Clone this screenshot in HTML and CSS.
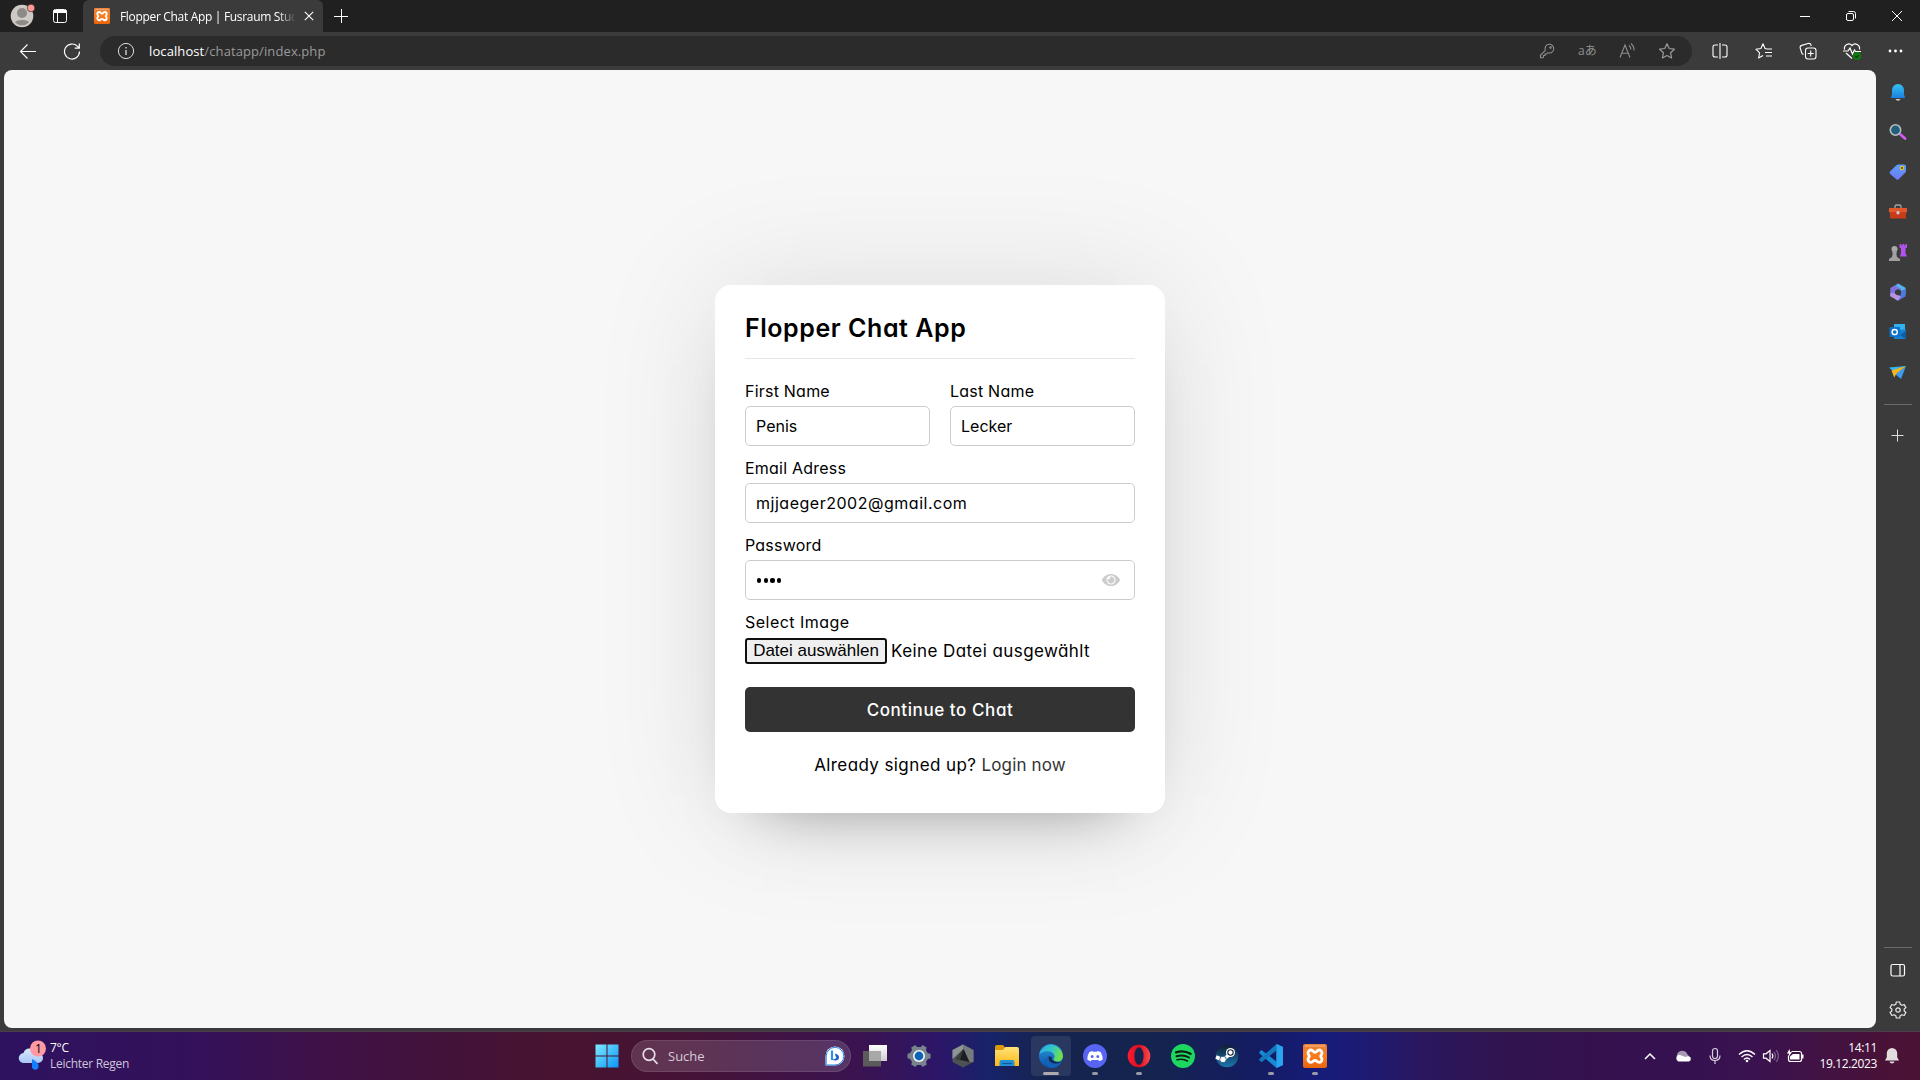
FILE: index.html
```
<!DOCTYPE html>
<html lang="de">
<head>
<meta charset="utf-8">
<title>Flopper Chat App</title>
<link rel="stylesheet" href="styles.css">
</head>
<body>
<svg class="defs" width="0" height="0" aria-hidden="true">
  <defs>
    <linearGradient id="orange" x1="0" y1="0" x2="0" y2="1"><stop offset="0" stop-color="#e8823a"/><stop offset=".5" stop-color="#fb7d1c"/><stop offset="1" stop-color="#e8640c"/></linearGradient>
    <linearGradient id="bell" x1="0" y1="0" x2="0" y2="1"><stop offset="0" stop-color="#35c2f2"/><stop offset="1" stop-color="#1b7fe0"/></linearGradient>
    <linearGradient id="tag" x1="0" y1="0" x2="0" y2="1"><stop offset="0" stop-color="#5aa2fa"/><stop offset="1" stop-color="#7077f5"/></linearGradient>
    <linearGradient id="win" x1="0" y1="0" x2="1" y2="1"><stop offset="0" stop-color="#7deaff"/><stop offset="1" stop-color="#0a95f5"/></linearGradient>
    <linearGradient id="folder" x1="0" y1="0" x2="0" y2="1"><stop offset="0" stop-color="#ffe27a"/><stop offset="1" stop-color="#fdb813"/></linearGradient>
    <linearGradient id="edgeTop" x1="0" y1="0" x2="1" y2=".3"><stop offset="0" stop-color="#2aa9e8"/><stop offset=".6" stop-color="#35c9c0"/><stop offset="1" stop-color="#6fe04c"/></linearGradient>
    <linearGradient id="edgeBot" x1="0" y1="0" x2="0" y2="1"><stop offset="0" stop-color="#2a9be0"/><stop offset="1" stop-color="#0a4fa6"/></linearGradient>
    <linearGradient id="opera" x1="0" y1="0" x2="1" y2="0"><stop offset="0" stop-color="#ff1b2d"/><stop offset=".5" stop-color="#d80d20"/><stop offset="1" stop-color="#ff4b4b"/></linearGradient>
    <linearGradient id="steam" x1="0" y1="0" x2="0" y2="1"><stop offset="0" stop-color="#101b33"/><stop offset="1" stop-color="#1b78b0"/></linearGradient>
    <linearGradient id="cloud" x1="0" y1="0" x2="0" y2="1"><stop offset="0" stop-color="#dbe9ff"/><stop offset="1" stop-color="#a8c6f7"/></linearGradient>
    <linearGradient id="task" x1="0" y1="0" x2="0" y2="1"><stop offset="0" stop-color="#ffffff"/><stop offset="1" stop-color="#cfcfcf"/></linearGradient>
    <symbol id="xampp" viewBox="0 0 24 24">
      <rect width="24" height="24" rx="2" fill="url(#orange)"/>
      <path d="M2 2h20" stroke="#f6b98a" stroke-width="1"/>
      <path d="M8 6a3 3 0 0 0-3 3c0 1.600 1.300 2 1.300 3.200S5 13.800 5 15.300a3 3 0 0 0 3 3c2.200 0 2-2 4-2s1.800 2 4 2a3 3 0 0 0 3-3c0-1.500-1.300-1.900-1.300-3.100S19 10.600 19 9a3 3 0 0 0-3-3c-2.200 0-1.800 2.400-4 2.400S10.200 6 8 6z" fill="none" stroke="#fff" stroke-width="2.800"/>
    </symbol>
  </defs>
</svg>
<div class="screen">
  <div class="browser">
    <div class="tabstrip">
      <svg class="avatar" width="26" height="26" viewBox="0 0 26 26"><circle cx="12" cy="14" r="11.300" fill="#cdc9c5"/><circle cx="12" cy="11" r="5" fill="#8e8a87"/><path d="M5 20.500c1-3.500 13-3.500 14 0a10.500 10.500 0 0 1-14 0z" fill="#8e8a87"/><circle cx="21" cy="6" r="3.800" fill="#ff9a96" stroke="#202020" stroke-width=".6"/></svg>
      <svg class="tabactions" width="16" height="16" viewBox="0 0 16 16" fill="none" stroke="#fff"><rect x="1.500" y="1.500" width="13" height="13" rx="2"/><path d="M1.500 3h13M5.500 5v9" stroke-width="1"/><path d="M2 2.500h12v2H2z" fill="#fff"/></svg>
      <div class="tab">
        <svg width="16" height="16"><use href="#xampp"/></svg>
        <span class="tab-title">Flopper Chat App | Fusraum Stud</span>
        <svg width="10" height="10" viewBox="0 0 10 10" stroke="#fff" stroke-width="1.100"><path d="M.8.800l8.400 8.400M9.200.800L.8 9.200"/></svg>
      </div>
      <svg class="newtab" width="16" height="16" viewBox="0 0 16 16" stroke="#fff"><path d="M8.500 1v14M1 8.500h14"/></svg>
      <div class="winbuttons">
        <svg width="12" height="12" viewBox="0 0 12 12" stroke="#fff"><path d="M1 6.500h10"/></svg>
        <svg width="12" height="12" viewBox="0 0 12 12" fill="none" stroke="#fff"><rect x="1.500" y="3.500" width="7" height="7" rx="1.500"/><path d="M3.500 1.500h5q2 0 2 2v5"/></svg>
        <svg width="12" height="12" viewBox="0 0 12 12" stroke="#fff"><path d="M1 1l10 10M11 1L1 11"/></svg>
      </div>
    </div>
    <div class="toolbar">
      <div class="nav">
        <svg width="18" height="18" viewBox="0 0 18 18" fill="none" stroke="#fff" stroke-width="1.100"><path d="M17 9.500H1.500M8.500 2.500l-7 7 7 7"/></svg>
        <svg width="18" height="18" viewBox="0 0 18 18" fill="none" stroke="#fff" stroke-width="1.200"><path d="M16.500 9.500a7.500 7.500 0 1 1-2.200-5.300l1.700 1.700M16.300 1.500v4.600h-4.600"/></svg>
      </div>
      <div class="omnibox">
        <svg width="18" height="18" viewBox="0 0 18 18" fill="none" stroke="#ddd"><circle cx="9" cy="9" r="7.600"/><path d="M9 8v5M9 5v1.500" stroke-width="1.300"/></svg>
        <span class="url"><b>localhost</b>/chatapp/index.php</span>
        <div class="omni-icons">
          <svg width="18" height="18" viewBox="0 0 18 18" fill="none" stroke="#8f8f8f" stroke-width="1.100"><path d="M7.300 8.300A4.400 4.400 0 1 1 9.700 10.700L8.500 12H7v1.500H5.500V15l-.7.800H2.500v-2.500z"/><circle cx="12.500" cy="5.500" r=".7"/></svg>
          <span class="aa">aあ</span>
          <svg width="18" height="18" viewBox="0 0 18 18" fill="none" stroke="#8f8f8f" stroke-width="1.100"><path d="M2 15.500L7 3l5 12.500M3.700 11.200h6.600M11 3.500q2 1.500 1.800 4M13 1.500q3.400 3 3 7"/></svg>
          <svg width="18" height="18" viewBox="0 0 18 18" fill="none" stroke="#9a9a9a" stroke-width="1.200" stroke-linejoin="round"><path d="M9 1.800l2.200 4.700 5.200.700-3.800 3.600 1 5.200L9 13.500 4.400 16l1-5.200L1.600 7.200l5.200-.7z"/></svg>
        </div>
      </div>
      <div class="tools">
        <svg width="18" height="18" viewBox="0 0 18 18" fill="none" stroke="#fff" stroke-width="1.100"><path d="M7 3H4Q2 3 2 5v8q0 2 2 2h3M11 3h3q2 0 2 2v8q0 2-2 2h-3M9 1v16"/></svg>
        <svg width="18" height="18" viewBox="0 0 18 18" fill="none" stroke="#fff" stroke-width="1.100" stroke-linejoin="round"><path d="M12 7l-2-.5L8 1.800 5.900 6.500.900 7.200l3.700 3.600-1 5.200L8 13.500M11.500 7H17M10 10.500h7M11 14h6"/></svg>
        <svg width="18" height="18" viewBox="0 0 18 18" fill="none" stroke="#fff" stroke-width="1.100"><rect x="6.500" y="6" width="10.500" height="11" rx="2.500"/><path d="M11.700 8.500v6M8.700 11.500h6M4.500 12.500L3 11.700 1.200 6q-.5-2 1.500-2.600L9 1.500q2.500-.500 3 1.500l.3 1"/></svg>
        <svg width="18" height="18" viewBox="0 0 18 18" fill="none" stroke="#fff" stroke-width="1.200"><path d="M1.500 7.500c-.8-4.500 4.500-7.500 7.500-4 3-3.500 8.300-.5 7.500 4M0 9h5l2-3 2.500 6 2-4 1 1.500H18M3 11l6 5.500"/><circle cx="14" cy="14" r="4" fill="#107c10" stroke="none"/><path d="M12 14l1.500 1.500L16 13" stroke="#063e06"/></svg>
        <svg width="18" height="18" viewBox="0 0 18 18" fill="#fff"><circle cx="3" cy="9" r="1.400"/><circle cx="8.500" cy="9" r="1.400"/><circle cx="14" cy="9" r="1.400"/></svg>
      </div>
    </div>
    <div class="body">
      <main class="page">
        <section class="card">
          <h1>Flopper Chat App</h1>
          <form>
            <div class="names">
              <div class="field"><label>First Name</label><div class="input name">Penis</div></div>
              <div class="field"><label>Last Name</label><div class="input name">Lecker</div></div>
            </div>
            <div class="field"><label>Email Adress</label><div class="input mail">mjjaeger2002@gmail.com</div></div>
            <div class="field"><label>Password</label>
              <div class="input pw"><span class="dots"><i></i><i></i><i></i><i></i></span>
                <svg width="18" height="16" viewBox="0 0 576 512" fill="#ccc"><path d="M288 144a110.940 110.940 0 0 0-31.240 5 55.400 55.400 0 0 1 7.240 27 56 56 0 0 1-56 56 55.400 55.400 0 0 1-27-7.240A111.710 111.710 0 1 0 288 144zm284.520 97.400C518.290 135.590 410.930 64 288 64S57.680 135.640 3.480 241.410a32.350 32.350 0 0 0 0 29.190C57.710 376.410 165.070 448 288 448s230.320-71.640 284.520-177.410a32.350 32.350 0 0 0 0-29.190zM288 400a144 144 0 1 1 144-144 143.930 143.930 0 0 1-144 144z"/></svg>
              </div>
            </div>
            <div class="field file"><label>Select Image</label>
              <div class="filerow"><span class="filebtn">Datei auswählen</span><span class="filename">Keine Datei ausgewählt</span></div>
            </div>
            <div class="submit">Continue to Chat</div>
          </form>
          <p class="link">Already signed up? <a>Login now</a></p>
        </section>
      </main>
      <aside class="sidebar">
        <svg width="20" height="20" viewBox="0 0 20 20"><path d="M10 2a6 6 0 0 0-6 6v4.500L2.800 16h14.400L16 12.500V8a6 6 0 0 0-6-6z" fill="url(#bell)"/><path d="M7.500 17h5q-.5 1.800-2.500 1.800T7.500 17z" fill="#c8c8c8"/></svg>
        <svg width="20" height="20" viewBox="0 0 20 20"><path d="M12.500 12.500l4.500 4" stroke="#d05cf0" stroke-width="2.800" stroke-linecap="round"/><circle cx="7.500" cy="8" r="5.200" fill="#1f5f7d" stroke="#b9bcbd" stroke-width="1.600"/></svg>
        <svg width="20" height="20" viewBox="0 0 20 20"><path d="M10.500 2.500H16q2 0 2 2V9q0 1-.8 1.800l-6.500 6.500q-1.200 1.200-2.400 0L2.200 12Q1 10.800 2 9.500L8.500 3.300q.9-.8 2-.8z" fill="url(#tag)"/><circle cx="14" cy="6" r="1.600" fill="#3c3c5c" stroke="#f2c21b" stroke-width="1.200"/></svg>
        <svg width="20" height="20" viewBox="0 0 20 20"><path d="M7 6V4.500Q7 3 8.500 3h3Q13 3 13 4.500V6" fill="none" stroke="#a5a5a5" stroke-width="1.300"/><path d="M1 6h18v4.500H1z" fill="#e2572b"/><path d="M2 10h16v6.500H2z" fill="#c83c1c"/><circle cx="10" cy="10.800" r="1.700" fill="#c9c9c9"/></svg>
        <svg width="20" height="20" viewBox="0 0 20 20"><path d="M11.500 2h1.700v1.500h1.200V2h1.800v1.500h1.200V2H19v3.500l-1.500 1V11l1.500 3.500h-7L13 11V6.500l-1.500-1z" fill="#b353ee"/><circle cx="6.500" cy="7" r="3" fill="#a9a9a9"/><path d="M4 9.500h5v1.300H8.200l.8 4.200 3 2v2H1v-2l3-2 .8-4.200H4z" fill="#a0a0a0"/></svg>
        <svg width="20" height="20" viewBox="0 0 20 20"><path d="M10 1.500L12.500 3v6L7 12l-1 3.500L2.300 14V6z" fill="#7f74de"/><path d="M10 1.500l7.500 4.300V12l-5-2V6.500L8 4z" fill="#55b5ee"/><path d="M17.700 7v7.200L10 18.700l-2.600-1.500 5.100-3V9z" fill="#4f79e0"/><path d="M2.300 11l4.700.5 6 2.700-3 4.500-7.700-4.500z" fill="#b893e6"/><path d="M10 7l3 1.700v3.100L10 13.500l-3-1.700V8.700z" fill="#3b3b3b"/></svg>
        <svg width="20" height="20" viewBox="0 0 20 20"><path d="M6 2h11v8H6z" fill="#35b0ee"/><path d="M6 8l12-.5V17H6z" fill="#1681cf"/><path d="M18 9v8l-6-4z" fill="#0f5ea3"/><rect x="1.500" y="5" width="10.500" height="10" rx="1" fill="#0a72cb"/><circle cx="6.700" cy="10" r="2.600" fill="none" stroke="#fff" stroke-width="1.500"/></svg>
        <svg width="20" height="20" viewBox="0 0 20 20"><path d="M1 5.500L18 4 7 11z" fill="#38b6f0"/><path d="M18 4l-5 13-6-5z" fill="#3a9bf0"/><path d="M3.500 8.500L18 4 8.500 11.500l-2.300 4z" fill="#f2b51e"/></svg>
        <hr>
        <svg class="plus" width="20" height="20" viewBox="0 0 20 20" stroke="#ddd"><path d="M9.500 3.500v12M3.500 9.500h12"/></svg>
        <hr class="low">
        <svg class="panel" width="20" height="20" viewBox="0 0 20 20" fill="none" stroke="#fff" stroke-width="1.200"><rect x="3" y="4.500" width="13.500" height="11.500" rx="1.800"/><path d="M12 4.500V16"/></svg>
        <svg width="20" height="20" viewBox="0 0 20 20" fill="none" stroke="#e8e8e8" stroke-width="1.200" stroke-linejoin="round"><path d="M8.300 2h3.400l.5 2.300 1.700 1 2.300-.7 1.700 3L16.200 9v2l1.700 1.500-1.700 3-2.300-.8-1.700 1-.5 2.300H8.300l-.5-2.300-1.700-1-2.300.800-1.700-3L3.800 11V9L2.100 7.500l1.700-3 2.300.800 1.700-1z"/><circle cx="10" cy="10" r="2.200"/></svg>
      </aside>
    </div>
  </div>
  <footer class="taskbar">
    <div class="weather">
      <svg width="30" height="34" viewBox="0 0 30 34"><path d="M7 24a5 5 0 0 1-.5-10Q8 9 13 9.500T20 14h1a5 5 0 0 1 0 10z" fill="url(#cloud)"/><path d="M15 20q7 3 6.500 8a3.300 3.300 0 0 1-6.500 0z" fill="#1480ff"/><circle cx="21" cy="9.500" r="8" fill="#ff99a4"/><text x="21.500" y="13.800" class="badge">1</text></svg>
      <div class="weather-text"><span>7°C</span><span class="rain">Leichter Regen</span></div>
    </div>
    <div class="dock">
      <svg class="start" width="24" height="24" viewBox="0 0 24 24" fill="url(#win)"><path d="M.5.500h11v11H.5zM12.500.500h11v11h-11zM.5 12.500h11v11H.5zM12.500 12.500h11v11h-11z"/></svg>
      <div class="search">
        <svg width="18" height="18" viewBox="0 0 18 18" fill="none" stroke="#e6dde8" stroke-width="1.700"><circle cx="8" cy="7.500" r="5.800"/><path d="M12 12l4 4.300" stroke-linecap="round"/></svg>
        <span>Suche</span>
        <svg width="20" height="20" viewBox="0 0 20 20"><path d="M.5 19.500V10A9.500 9.500 0 1 1 10 19.500z" fill="#fff"/><path d="M1.200 19V10A8.800 8.800 0 1 1 10 19z" fill="none" stroke="#2186e8" stroke-width="1"/><path d="M7 4.500v9.500" stroke="#2a8ff0" stroke-width="2.200"/><path d="M10 7.500q4.500 1.500 4 4.300t-3.500 2.700q-2 0-3.300-1.500 2.300.5 3.800-.8 1.200-1.200-.5-2z" fill="#1c5fd0"/></svg>
      </div>
      <div class="app"><svg width="24" height="24" viewBox="0 0 24 24"><path d="M6 1h18v16H6z" fill="url(#task)"/><path d="M0 7h18v15.500H0z" fill="#5b5b5b"/><path d="M6 7h12v10H6z" fill="#a8a8a8"/></svg></div>
      <div class="app"><svg width="24" height="24" viewBox="0 0 24 24"><path d="M8.500 1l1.500 2h4l1.500-2 4.200 2.400-.8 2.600 1.900 3.200 2.700.6v4.600l-2.700.6L19 18l.8 2.600-4.200 2.400-1.600-2h-4l-1.600 2-4.200-2.400L5 18l-1.900-3.100L.5 14.300V9.700l2.700-.6L5 6l-.8-2.600z" fill="#78838e"/><circle cx="12" cy="12" r="6" fill="#f3f6f8"/><circle cx="12" cy="12" r="4.400" fill="#0f63b5"/></svg></div>
      <div class="app"><svg width="24" height="24" viewBox="0 0 24 24"><path d="M12 .5l10.500 5.500v12L12 23.500 1.500 18V6z" fill="#4c5154"/><path d="M12 .5l10.500 5.500v12L18.500 18 12.500 5z" fill="#767b7e"/><path d="M12 .5L1.500 6v9L12.500 5z" fill="#8e9396"/><path d="M12.500 5l6 13L5 15z" fill="#1b1e21"/><path d="M12.500 5L9 16l-4-1z" fill="#393d40"/></svg></div>
      <div class="app"><svg width="24" height="24" viewBox="0 0 24 24"><path d="M0 3q0-2 2-2h6l2.500 3v5H0z" fill="#d99a0b"/><path d="M0 6h8l2.500-3H22q2 0 2 2v17H0z" fill="url(#folder)"/><path d="M4.500 22v-4q0-2 2-2h11q2 0 2 2v4z" fill="#2391d6"/><path d="M7 19.500h10" stroke="#0d5c9f" stroke-width="1.300"/></svg></div>
      <div class="app active"><svg width="24" height="24" viewBox="0 0 24 24"><circle cx="12" cy="12" r="12" fill="url(#edgeBot)"/><path d="M.3 10.500A12 12 0 0 1 24 12c0 3.500-2.500 5.500-5.500 5.500-2.500 0-4-1-4-2s1-1.300 1-3c0-3-3-5.300-6.500-5.300-4.500 0-8 2-8.700 3.300z" fill="url(#edgeTop)"/><path d="M9.500 12c-1.500 4.500 3 9 9.500 7.500 1.500-.4 2.800-1 2.800-.6-2 3.300-5.800 5.100-9.800 5.100-3.500-1-5.800-4-5.800-7.300 0-2.200 1.500-4 3.300-4.700z" fill="#1461b8"/><path d="M9.700 12.500c-.8 3.500 1.800 6.500 6 7q3.500.3 6.500-1.600-2.700.6-5 0c-3.500-.8-5.500-2.900-4.400-5.200z" fill="#13294d"/></svg><i class="on"></i></div>
      <div class="app"><svg width="24" height="24" viewBox="0 0 24 24"><circle cx="12" cy="12" r="12" fill="#5865f2"/><path d="M9.500 7l.4.800h4.200l.4-.8q1.800.2 3.300 1.200 2 3.500 1.900 7.300-1.500 1.300-3.500 1.700l-.8-1.300h-6.800l-.8 1.300q-2-.4-3.500-1.700-.1-3.800 1.900-7.300Q7.700 7.200 9.500 7z" fill="#fff"/><ellipse cx="9.200" cy="12.500" rx="1.400" ry="1.500" fill="#5865f2"/><ellipse cx="14.800" cy="12.500" rx="1.400" ry="1.500" fill="#5865f2"/></svg><i></i></div>
      <div class="app"><svg width="24" height="24" viewBox="0 0 24 24"><circle cx="12" cy="12" r="11.300" fill="url(#opera)"/><ellipse cx="12" cy="12" rx="4.600" ry="8.700" fill="#15244f"/></svg><i></i></div>
      <div class="app"><svg width="24" height="24" viewBox="0 0 24 24"><circle cx="12" cy="12" r="12" fill="#1ed760"/><g fill="none" stroke="#101c14" stroke-linecap="round"><path d="M5 8.300q8-2.300 14.500 1.500" stroke-width="2.300"/><path d="M5.500 12.200q7-2 12.500 1.300" stroke-width="2"/><path d="M6 15.800q5.800-1.500 10.500 1.200" stroke-width="1.600"/></g></svg></div>
      <div class="app"><svg width="24" height="24" viewBox="0 0 24 24"><circle cx="12" cy="12" r="11.300" fill="url(#steam)"/><path d="M1 13l7 3 7-6" stroke="#fff" stroke-width="3.600" fill="none"/><circle cx="15.500" cy="8.500" r="4.500" fill="#fff"/><circle cx="15.500" cy="8.500" r="2.700" fill="#fff" stroke="#16243f" stroke-width="1.100"/><circle cx="8" cy="15.500" r="3.300" fill="#fff" stroke="#17456d" stroke-width=".8"/></svg></div>
      <div class="app"><svg width="24" height="24" viewBox="0 0 24 24"><path d="M17.500 0L24 3v18l-6.500 3v-6.500L2.500 6 .3 8v1.300L17.500 24z" fill="#168bd4"/><path d="M17.500 0L.3 15v1.300l2.200 1.900L17.500 6.500z" fill="#1478be"/><path d="M17.500 0L24 3v18l-6.500 3z" fill="#2ba4ef"/></svg><i></i></div>
      <div class="app"><svg width="24" height="24"><use href="#xampp"/></svg><i></i></div>
    </div>
    <div class="tray">
      <svg class="chev" width="14" height="14" viewBox="0 0 14 14" fill="none" stroke="#fff" stroke-width="1.500"><path d="M2 10l5-5 5 5"/></svg>
      <svg class="drive" width="18" height="14" viewBox="0 0 18 14"><path d="M3 9a5.500 5.500 0 0 1 10.500-3.500L17 9z" fill="#a79bb3"/><path d="M4.500 12.500a3.500 3.500 0 0 1 0-6.500q2-.5 4 1L12 8q1-1.200 3-.5a2.600 2.600 0 0 1 0 5z" fill="#fff"/></svg>
      <svg class="mic" width="14" height="18" viewBox="0 0 14 18" fill="none" stroke="#d8cfe0" stroke-width="1.200"><rect x="4.500" y="1.500" width="5" height="10" rx="2.500"/><path d="M2 8.500q0 5 5 5t5-5M7 13.500V17"/></svg>
      <svg class="wifi" width="18" height="14" viewBox="0 0 18 14" fill="none" stroke="#fff" stroke-width="1.400"><path d="M1 5.500q8-7.500 16 0M3.500 8q5.500-5 11 0M6 10.500q3-2.800 6 0"/><circle cx="9" cy="12" r="1.300" fill="#fff" stroke="none"/></svg>
      <svg class="vol" width="18" height="14" viewBox="0 0 18 14" fill="none" stroke="#fff" stroke-width="1.200"><path d="M1.500 4.800H4L8 1.500v11L4 9.200H1.500zM10 4.500q1.700 2.500 0 5"/><path d="M12 2.800q3 4.200 0 8.400M14.300 1.200q4.200 5.800 0 11.600" stroke="#7a6192"/></svg>
      <svg class="bat" width="18" height="14" viewBox="0 0 18 14"><path d="M5.500 2.500h8q2 0 2 2v6q0 2-2 2h-9q-2 0-2-2v-4" fill="none" stroke="#fff" stroke-width="1.200"/><path d="M4 7.500L7 5h6.500v5.500H4zM16 5.500h1.500v4H16zM3.500 0L1 4.500h2L2.500 8 6 3H4z" fill="#fff"/></svg>
      <div class="clock"><span>14:11</span><span>19.12.2023</span></div>
      <svg width="16" height="18" viewBox="0 0 16 18" fill="#e4dddd"><path d="M8 1a5.200 5.200 0 0 0-5.200 5.200v4L1 13.500h14l-1.800-3.300v-4A5.200 5.200 0 0 0 8 1zM5.500 14.500h5Q10 16.500 8 16.500t-2.500-2z"/></svg>
    </div>
  </footer>
</div>
</body>
</html>
```
FILE: styles.css
```
* { box-sizing: border-box; }
body { margin: 0; overflow: hidden; background: #3b3b3b; }
svg { display: block; flex: none; }
.defs { position: absolute; }
.screen { width: 1920px; height: 1080px; display: flex; flex-direction: column; font: 12px "Open Sans", "Noto Sans", sans-serif; color: #fff; }
.browser { height: 1032px; display: flex; flex-direction: column; background: #3b3b3b; border-bottom: 1px solid #4b3f4b; }

.tabstrip { height: 32px; flex: none; display: flex; align-items: center; background: #202020; }
.avatar { margin: -2px 0 0 10px; }
.tabactions { margin-left: 16px; }
.tab { width: 240px; height: 32px; margin-left: 15px; padding: 0 11px; display: flex; align-items: center; background: #3b3b3b; border-radius: 6px 6px 0 0; }
.tab-title { width: 176px; margin: 0 8px 0 10px; letter-spacing: -.32px; white-space: nowrap; -webkit-mask-image: linear-gradient(90deg, #000 90%, transparent); mask-image: linear-gradient(90deg, #000 90%, transparent); }
.newtab { margin-left: 10px; }
.winbuttons { margin-left: auto; margin-right: 17px; display: flex; gap: 34px; }

.toolbar { height: 38px; flex: none; display: flex; align-items: center; }
.nav { width: 100px; padding-left: 19px; display: flex; gap: 26px; }
.omnibox { width: 1592px; height: 30px; padding: 0 16px 0 17px; display: flex; align-items: center; border-radius: 15px; background: #2b2b2b; }
.url { margin-left: 14px; font-size: 13px; letter-spacing: .1px; color: #9a9a9a; }
.url b { font-weight: 400; color: #fff; }
.omni-icons { margin-left: auto; display: flex; align-items: center; gap: 22px; }
.aa { width: 18px; font: 12px/18px "Open Sans", "Noto Sans CJK JP", sans-serif; color: #8f8f8f; white-space: nowrap; }
.tools { margin-left: 19px; display: flex; gap: 26px; }

.body { display: flex; flex: none; height: 961px; padding-left: 4px; }
.page { width: 1872px; height: 958px; display: flex; align-items: center; justify-content: center; background: #f7f7f7; border-radius: 8px; overflow: hidden; }
.card { width: 450px; height: 528px; padding: 25px 30px; border-radius: 16px; background: #fff; color: #000; font: 16px/24px Inter, "Open Sans", sans-serif; font-feature-settings: "cv11"; box-shadow: 0 0 128px 0 rgba(0,0,0,.1), 0 32px 64px -48px rgba(0,0,0,.5); }
h1 { height: 49px; margin: 0 0 20px; font-size: 25px; line-height: 37px; font-weight: 600; letter-spacing: .55px; border-bottom: 1px solid #e6e6e6; }
form { margin: 0; }
.names { display: flex; gap: 20px; }
.names .field { flex: 1; }
.field { margin-bottom: 10px; }
label { display: block; height: 27px; line-height: 25px; letter-spacing: .22px; }
.input { height: 40px; padding: 0 10px; display: flex; align-items: center; border: 1px solid #ccc; border-radius: 5px; }
.mail { letter-spacing: .52px; }
.pw { padding-right: 14px; justify-content: space-between; }
.dots { display: flex; gap: 2.500px; padding: 1px 0 0 1px; }
.dots i { width: 4.200px; height: 4.200px; border-radius: 50%; background: #000; }
.filerow { display: flex; align-items: center; height: 28px; font-size: 17px; }
.filebtn { width: 142px; height: 26px; border: 2px solid #101010; border-radius: 3px; background: #efefef; font: 17px/22px "Liberation Sans", sans-serif; text-align: center; white-space: nowrap; }
.filename { margin-left: 4px; letter-spacing: .42px; white-space: nowrap; }
.file { margin-bottom: 22px; }
.file label { letter-spacing: .48px; }
.submit { height: 45px; border-radius: 5px; background: #333; color: #fff; font-weight: 500; font-size: 17px; line-height: 46px; letter-spacing: .58px; text-align: center; }
.link { margin: 21px 0 0; font-size: 17px; letter-spacing: .4px; text-align: center; }
.link a { color: #333; letter-spacing: .15px; }

.sidebar { width: 44px; height: 961px; padding-top: 12px; display: flex; flex-direction: column; align-items: center; gap: 20px; }
.sidebar hr { width: 28px; height: 1px; margin: 2px 0 1px; border: 0; background: #6b6b6b; flex: none; }
.sidebar hr.low { margin: auto 0 -8px; }
.sidebar svg:last-child { margin-bottom: 11px; }

.taskbar { height: 48px; display: flex; align-items: center; background: linear-gradient(90deg, #2e125f 0, #34115a 200px, #3f1147 320px, #47132f 560px, #451338 700px, #3a1350 860px, #2c1668 940px, #17236a 990px, #15244f 1040px, #15244f 1150px, #141c62 1260px, #161c7a 1320px, #1c1b74 1360px, #2a175f 1420px, #301450 1500px, #35114e 1600px, #351150 1680px, #3a1250 1750px, #4a1235 1900px); }
.weather { width: 595px; padding-left: 17px; display: flex; align-items: center; gap: 3px; }
.badge { font: 12px "Open Sans", sans-serif; text-anchor: middle; fill: #000; }
.weather-text { display: flex; flex-direction: column; line-height: 16px; letter-spacing: -.28px; }
.rain { color: #cfc4da; }
.dock { display: flex; align-items: center; height: 48px; }
.search { width: 220px; height: 32px; margin: 0 2px 0 12px; padding: 0 5px 0 9px; display: flex; align-items: center; gap: 9px; border-radius: 16px; border: 1px solid rgba(255,255,255,.1); background: rgba(255,255,255,.14); color: #d9cbd9; font-size: 13px; }
.search svg:last-child { margin-left: auto; }
.app { width: 40px; height: 40px; margin: 0 2px; padding-top: 8px; display: flex; flex-direction: column; align-items: center; border-radius: 4px; }
.app i { width: 6px; height: 3px; margin-top: 4px; border-radius: 2px; background: #9a9aa6; }
.app i.on { width: 16px; background: #b0a9ae; }
.app.active { background: rgba(255,255,255,.09); }
.tray { margin-left: auto; padding-right: 20px; display: flex; align-items: center; }
.chev { margin-right: 1px; }
.drive { margin-left: 16px; }
.mic { margin-left: 16px; }
.wifi { margin-left: 16px; }
.vol { margin-left: 6px; }
.bat { margin-left: 6px; }
.clock { width: 73px; margin-right: 7px; display: flex; flex-direction: column; align-items: flex-end; line-height: 16px; letter-spacing: -.36px; }
```
